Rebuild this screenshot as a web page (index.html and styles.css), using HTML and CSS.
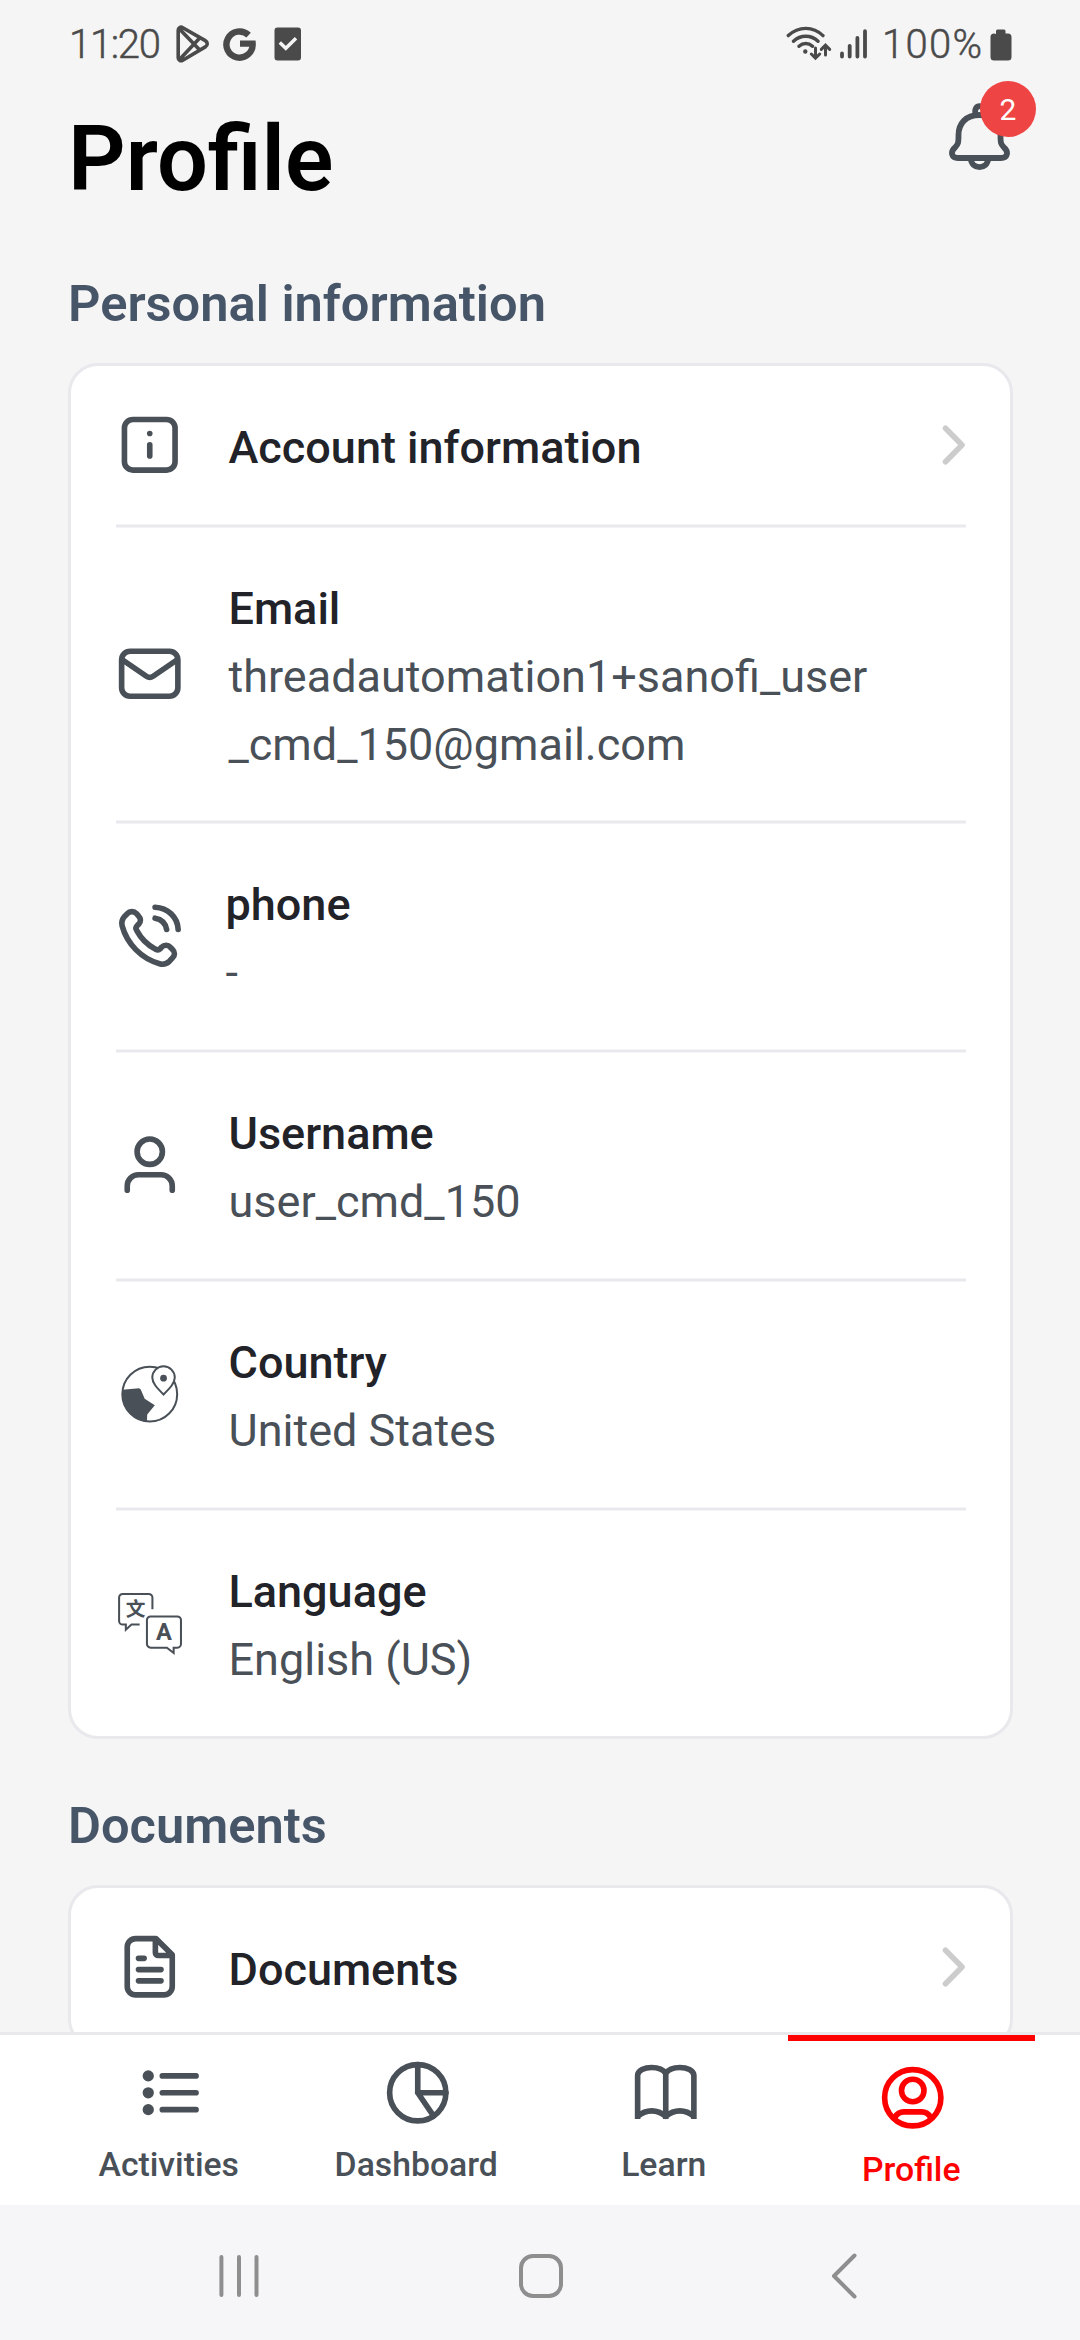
FILE: index.html
```html
<!DOCTYPE html>
<html lang="en">
<head>
<meta charset="utf-8">
<title>Profile</title>
<link rel="stylesheet" href="styles.css">
</head>
<body>
<div class="screen">
  <div class="status">
    <div class="status-left">
      <span class="time">11:20</span>
      <svg class="play" width="34" height="38" viewBox="0 0 34 38"><path d="M2.2 5.2C2.2 2.6 4.6 1.4 6.8 2.7L29.3 15.6c2.6 1.5 2.6 4.8 0 6.3L6.8 35.2C4.6 36.5 2.2 35.4 2.2 32.8ZM3.5 4 23.5 24.8M3.5 34.4 23.5 13.2"/></svg>
      <svg class="google" width="34" height="34" viewBox="0 0 34 34"><path d="M25.6 8.1A13.1 13.1 0 1 0 29.6 16.6H17"/></svg>
      <svg class="check" width="28" height="34" viewBox="0 0 28 34"><rect x=".5" y=".5" width="26.5" height="33" rx="3"/><path d="M5.8 15.5l6 5.8L22 11.2"/></svg>
    </div>
    <div class="status-right">
      <svg class="wifi" width="46" height="36" viewBox="0 0 46 36"><path d="M2.3 9.6C12.5-.1 27-.1 37 9.6M7.5 15.2c7-6.7 17.500-6.700 24.500 0M13 20.300c4-3.700 9.500-3.700 13.500 0"/><circle cx="19.300" cy="25.500" r="2.200"/><path class="thin" d="M29.500 22v9.500M25.300 28l4.200 4.200 4.200-4.200M39.500 29v-9.500M35.300 23.400l4.200-4.200 4.200 4.200"/></svg>
      <svg class="signal" width="28" height="30" viewBox="0 0 28 30"><path d="M2 24.500v3M9.700 16.800v10.700M17.400 9v18.500M25 2.200v25.300"/></svg>
      <span class="percent">100%</span>
      <svg class="battery" width="22" height="32" viewBox="0 0 22 32"><path d="M6 5V2a1.500 1.500 0 0 1 1.500-1.500h6.500A1.500 1.500 0 0 1 15.500 2v2.500H18a3.500 3.500 0 0 1 3.500 3.500v20a3.500 3.500 0 0 1-3.500 3.500H4A3.500 3.500 0 0 1 .5 28V8A3.500 3.500 0 0 1 4 4.500Z"/></svg>
    </div>
  </div>

  <header class="header">
    <h1>Profile</h1>
    <div class="bell">
      <svg width="64" height="70" viewBox="0 0 64 70"><path d="M31.500 13C17.500 13 10.500 22 10.500 33C10.500 42 10 42 7 45.500C2 50 3.500 56 10 56H53C59.500 56 61 50 56 45.500C53 42 52.500 42 52.500 33C52.500 22 45.500 13 31.500 13ZM22.700 56.500C23.700 68 39.300 68 40.300 56.500M27.500 12C25 1.500 38 1.500 35.500 12"/></svg>
      <span class="badge">2</span>
    </div>
  </header>

  <main class="content">
    <h2>Personal information</h2>
    <section class="card">
      <div class="row">
        <svg class="icon" viewBox="0 0 24 24"><rect x="3" y="3" width="18" height="18" rx="3"/><path d="M12 8v.01M12 12v4"/></svg>
        <div class="text"><b>Account information</b></div>
        <svg class="chevron" width="24" height="42" viewBox="0 0 24 42"><path d="M3.500 4.300 20 21 3.500 37.700"/></svg>
      </div>
      <div class="rule"></div>
      <div class="row">
        <svg class="icon" viewBox="0 0 24 24"><rect x="2" y="4" width="20" height="16" rx="3"/><path d="M2.500 7.200l8.300 5.700q1.200.8 2.400 0l8.300-5.700"/></svg>
        <div class="text"><b>Email</b><span>threadautomation1+sanofi_user<br>_cmd_150@gmail.com</span></div>
      </div>
      <div class="rule"></div>
      <div class="row phone">
        <svg class="icon" viewBox="0 0 24 24"><path d="M3.200 4.600L4 3.800C4.900 2.800 6.400 2.800 7.300 3.800L8 4.600C8.900 5.500 8.900 6.600 8.100 7.500L7.500 8.100C7 8.600 7 9.200 7.400 9.800C8.900 12.600 11.200 14.900 14 16.400C14.600 16.700 15.200 16.800 15.700 16.300L16.200 15.700C17.100 14.800 18.500 14.800 19.300 15.700L20.100 16.500C21 17.400 21 18.600 20.100 19.500L19 20.700C18 21.700 16.900 22 15.500 21.600C9 19.800 3.900 14.500 2.200 8.200C1.800 6.800 2 5.900 3.200 4.600ZM13.900 1.500C18.400 1.700 21.900 5 22.100 9.400M13.900 5.400C16.200 5.800 17.600 7.100 18 9.400"/></svg>
        <div class="text"><b>phone</b><span>-</span></div>
      </div>
      <div class="rule"></div>
      <div class="row">
        <svg class="icon" viewBox="0 0 24 24"><circle cx="12" cy="7" r="4.500"/><path d="M4 20.700v-1.500a4 4 0 0 1 4-4h8a4 4 0 0 1 4 4v1.500"/></svg>
        <div class="text"><b>Username</b><span>user_cmd_150</span></div>
      </div>
      <div class="rule"></div>
      <div class="row">
        <svg class="icon fine" viewBox="0 0 24 24"><circle cx="12" cy="11.800" r="9.750"/><path class="land" d="M2.300 10.200 8.200 9.700 8.800 10.100 10.200 13.400 13.800 15.700 11.100 19 11 21.600C5.500 21 1.500 16 2.300 10.200Z"/><path class="pin" d="M16.900 11.900C14.500 9.500 12.900 7.800 12.900 5.900a4 4 0 0 1 8 0c0 1.900-1.600 3.600-4 6Z"/><circle class="dot" cx="16.900" cy="6.100" r="1.200"/></svg>
        <div class="text"><b>Country</b><span>United States</span></div>
      </div>
      <div class="rule"></div>
      <div class="row">
        <svg class="icon fine" viewBox="0 0 24 24"><path d="M12.950 6.800V2.700a1.300 1.300 0 0 0-1.300-1.300H2.400a1.300 1.300 0 0 0-1.300 1.300v8.300a1.300 1.300 0 0 0 1.300 1.300h1.100v1.800l2-1.800h2.900M12.300 9.400h9.500a1.300 1.300 0 0 1 1.300 1.300v8.500a1.300 1.300 0 0 1-1.300 1.300h-1.300v1.900l-2.400-1.900h-5.800a1.300 1.300 0 0 1-1.300-1.300v-8.500a1.300 1.300 0 0 1 1.300-1.300Z"/><text class="han" x="7" y="9.400">文</text><text class="latin" x="17" y="17.900">A</text></svg>
        <div class="text"><b>Language</b><span>English (US)</span></div>
      </div>
    </section>

    <h2>Documents</h2>
    <section class="card">
      <div class="row">
        <svg class="icon" viewBox="0 0 24 24"><path d="M14.200 2H7a3 3 0 0 0-3 3v14a3 3 0 0 0 3 3h10a3 3 0 0 0 3-3V7.700ZM14 2.500V7a1 1 0 0 0 1 1h4.500M8 9h2M8 13h8M8 17h8"/></svg>
        <div class="text"><b>Documents</b></div>
        <svg class="chevron" width="24" height="42" viewBox="0 0 24 42"><path d="M3.500 4.300 20 21 3.500 37.700"/></svg>
      </div>
    </section>
  </main>

  <nav class="tabs">
    <div class="tab">
      <svg class="icon" viewBox="0 0 24 24"><path d="M9 6h12M9 12h12M9 18h12"/><g class="dot"><circle cx="4" cy="6" r="2"/><circle cx="4" cy="12" r="2"/><circle cx="4" cy="18" r="2"/></g></svg>
      <span>Activities</span>
    </div>
    <div class="tab">
      <svg class="icon" viewBox="0 0 24 24"><circle cx="12" cy="12" r="10"/><path d="M12 2v10h10M12 12l5.600 8.200"/></svg>
      <span>Dashboard</span>
    </div>
    <div class="tab">
      <svg class="icon butt" viewBox="0 0 24 24"><path d="M2 21.300V5.900C2 4 4.500 3 7 3s4 .6 5 2.100C13 3.600 14.500 3 17 3s5 1 5 2.900V21.300M12 5v16.300M2 20.400C5 17.800 9 17.800 12 20.400C15 17.800 19 17.800 22 20.400"/></svg>
      <span>Learn</span>
    </div>
    <div class="tab active">
      <svg class="icon" viewBox="0 0 24 24"><circle cx="12" cy="12" r="10"/><circle cx="12" cy="9.400" r="4"/><path d="M5.700 18.900C6.400 17.600 7.300 17 8.800 17h6.400c1.500 0 2.400.6 3.100 1.900"/></svg>
      <span>Profile</span>
    </div>
  </nav>

  <div class="system">
    <svg width="40" height="44" viewBox="0 0 40 44"><path d="M2.400 3v38M20 3v38M37.500 3v38"/></svg>
    <svg class="home" width="44" height="44" viewBox="0 0 44 44"><rect x="2" y="2" width="40" height="40" rx="12"/></svg>
    <svg width="26" height="46" viewBox="0 0 26 46"><path d="M23.500 2.500 3 23 23.500 43.500"/></svg>
  </div>
</div>
</body>
</html>
```
FILE: styles.css
```css
* { box-sizing: border-box; }
body { margin: 0; font-family: Roboto, sans-serif; }
svg { display: block; flex: none; fill: none; }
h1, h2 { margin: 0; }

.screen {
  width: 1080px;
  height: 2340px;
  display: flex;
  flex-direction: column;
  overflow: hidden;
  background: #f5f5f5;
}

.status {
  flex: none;
  height: 88px;
  padding: 0 68px 0 69px;
  display: flex;
  justify-content: space-between;
  color: #4a4a4a;
  font-size: 40px;
  font-weight: 300;
  line-height: 89px;
}
.status-left, .status-right { display: flex; align-items: center; }
.time { width: 107px; letter-spacing: -1.3px; -webkit-text-stroke: .5px #4a4a4a; }
.percent { width: 108px; letter-spacing: 1.3px; -webkit-text-stroke: .5px #4a4a4a; }
.play { stroke: #4a4a4a; stroke-width: 3.6; }
.google { margin-left: 13px; stroke: #4a4a4a; stroke-width: 6.400; }
.check { margin-left: 17px; fill: #4a4a4a; }
.check path { fill: none; stroke: #f5f5f5; stroke-width: 3.400; }
.wifi { margin-right: 8px; stroke: #4a4a4a; stroke-width: 3.400; stroke-linecap: round; }
.wifi circle { fill: #4a4a4a; stroke: none; }
.wifi .thin { stroke-width: 3; }
.signal { margin-right: 14px; stroke: #4a4a4a; stroke-width: 3.800; stroke-linecap: round; }
.battery { fill: #4a4a4a; margin-top: 2px; }

.header {
  flex: none;
  height: 186px;
  padding: 18px 68px 0 68px;
  display: flex;
  justify-content: space-between;
  align-items: flex-start;
}
h1 { font-size: 90px; font-weight: 600; line-height: 108px; color: #000; }
.bell { position: relative; margin-top: -4px; }
.bell svg { stroke: #495057; stroke-width: 5.800; }
.badge {
  position: absolute;
  left: 32px;
  top: -21px;
  width: 56px;
  height: 56px;
  border-radius: 50%;
  background: #ef4444;
  color: #fff;
  font-size: 30px;
  line-height: 58px;
  text-align: center;
}

.content {
  flex: 1;
  min-height: 0;
  overflow: hidden;
  padding: 0 67px 0 68px;
}
h2 { font-size: 50.625px; font-weight: 600; line-height: 60px; color: #475569; margin-bottom: 29px; }
.card {
  border: 3px solid #e8e8ed;
  border-radius: 30px;
  background: #fff;
  padding: 0 44px 0 45px;
  margin-bottom: 57px;
}
.row { display: flex; align-items: center; height: 158px; }
.row:has(span) { height: 225px; }
.row:has(br) { height: 292px; }
.rule {
  height: 4px;
  background: #e8e8ed;
  border: solid #f4f4f6;
  border-width: 1px 0;
}
.text {
  flex: 1;
  margin-left: 45px;
  padding-top: 5px;
  display: flex;
  flex-direction: column;
  font-size: 45px;
  line-height: 68px;
  color: #495057;
}
.phone .text { margin-left: 42px; }
.text b { font-weight: 500; color: #222229; }
.chevron { stroke: #ccc; stroke-width: 5.600; stroke-linecap: round; stroke-linejoin: round; }

.icon {
  width: 67.5px;
  height: 67.5px;
  stroke: #495057;
  stroke-width: 2;
  stroke-linecap: round;
  stroke-linejoin: round;
}
.icon.fine { stroke-width: .72; stroke-linecap: butt; stroke-linejoin: miter; }
.icon.butt { stroke-linecap: butt; }
.icon .land, .icon .dot { fill: #495057; stroke: none; }
.icon .pin { fill: #fff; }
.icon text { fill: #495057; stroke: none; text-anchor: middle; font-weight: 700; }
.han { font-family: "Noto Sans CJK SC", sans-serif; font-size: 7px; }
.latin { font-family: Roboto, sans-serif; font-size: 8.400px; }

.tabs {
  flex: none;
  height: 173px;
  padding: 0 45px;
  display: flex;
  background: #fff;
  border-top: 3px solid #e8e8ed;
}
.tab {
  flex: 1;
  display: flex;
  flex-direction: column;
  align-items: center;
  padding-top: 24px;
  color: #495057;
  font-size: 33.75px;
  font-weight: 500;
  line-height: 40px;
}
.tab .icon { margin: 0 0 18px 3px; }
.tab.active { color: #f00; border-top: 6px solid #f00; padding-top: 23px; }
.active .icon { stroke: #f00; }

.system {
  flex: none;
  height: 135px;
  padding: 6px 223px 0 219px;
  display: flex;
  align-items: center;
  justify-content: space-between;
  background: #f6f6f9;
}
.system svg { stroke: #8e8e8e; stroke-width: 4; stroke-linecap: round; stroke-linejoin: round; }
.system .home { margin-right: 8px; }
```
